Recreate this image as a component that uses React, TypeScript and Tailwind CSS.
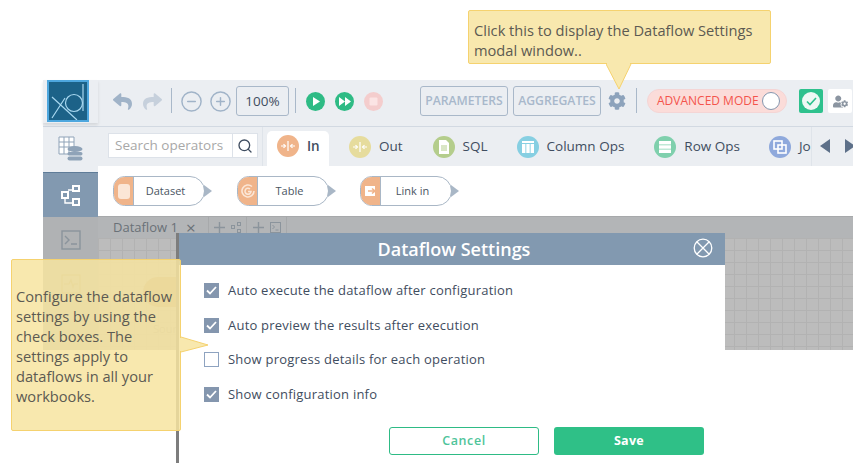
import { CircleMinus, CirclePlus, Search } from 'lucide-react'
import { FaCog, FaReply, FaShare, FaUserCog } from 'react-icons/fa'
import type { ReactNode } from 'react'

function InOutGlyph() {
  return (
    <svg width="16" height="12" viewBox="0 0 16 12" fill="none" stroke="#fff" strokeWidth="1.2">
      <path d="M8 1v10M1 6h4M15 6h-4" />
      <path d="M3.5 4.2 5.5 6l-2 1.8M12.5 4.2 10.5 6l2 1.8" />
    </svg>
  )
}

function TabCircle({ color, children }: { color: string; children: ReactNode }) {
  return <span className={`flex h-[22px] w-[22px] shrink-0 items-center justify-center rounded-full ${color}`}>{children}</span>
}

function PlusGlyph() {
  return (
    <svg width="11" height="11" viewBox="0 0 11 11" stroke="#8b949c" strokeWidth="1.4">
      <path d="M5.5 0v11M0 5.5h11" />
    </svg>
  )
}

const sqlGlyph = (
  <svg width="12" height="14" viewBox="0 0 12 14">
    <path d="M1 0h7l3 3v11H1z" fill="#fff" />
    <path d="M3 6h6M3 8h6M3 10h6" stroke="#b4cd8c" strokeWidth="1" />
  </svg>
)
const columnGlyph = (
  <svg width="14" height="14" viewBox="0 0 14 14" fill="#fff">
    <path d="M1 1h12v2H1zM1 4h3.4v9H1zM5.3 4h3.4v9H5.3zM9.6 4H13v9H9.6z" />
  </svg>
)
const rowGlyph = (
  <svg width="14" height="12" viewBox="0 0 14 12" fill="#fff">
    <path d="M1 0h12v3.4H1zM1 4.3h12v3.4H1zM1 8.6h12V12H1z" />
  </svg>
)
const joinGlyph = (
  <svg width="14" height="14" viewBox="0 0 14 14" fill="none" stroke="#fff" strokeWidth="1.6">
    <rect x="1" y="1" width="8" height="8" />
    <rect x="5" y="5" width="8" height="8" />
  </svg>
)

function OpTab({ label, color, glyph, className }: { label: string; color: string; glyph: ReactNode; className: string }) {
  return (
    <div className={`mt-[2px] flex h-[35px] shrink-0 items-center gap-[8px] text-[13.5px] text-[#3f4d60] ${className}`}>
      <TabCircle color={color}>{glyph}</TabCircle>
      <span>{label}</span>
    </div>
  )
}

function NodeGlyph({ kind }: { kind: string }) {
  if (kind === 'dataset') return <span className="h-[15px] w-[12px] rounded-[3px] bg-[#fbe6d6]" />
  if (kind === 'table')
    return (
      <svg width="14" height="14" viewBox="0 0 14 14" fill="none" stroke="#fbe6d6" strokeWidth="1.6">
        <path d="M11 2.5A6 6 0 1 0 13 7" />
        <path d="M9 5A3 3 0 1 0 10 7.5H7" />
      </svg>
    )
  return (
    <svg width="14" height="14" viewBox="0 0 14 14" fill="none">
      <path d="M1 2h10v10H1z" fill="#fff" />
      <path d="M4 7h6M8 4.5 11 7l-3 2.5" stroke="#f0b48a" strokeWidth="1.6" />
    </svg>
  )
}

function OperatorNode({ label, kind, className }: { label: string; kind: string; className: string }) {
  return (
    <div className={`flex items-center ${className}`}>
      <div className="flex h-[30px] w-[92px] overflow-hidden rounded-l-[14px] rounded-r-[18px] border border-[#a9b7c6] bg-white">
        <div className="flex w-[20px] shrink-0 items-center justify-center border-r border-[#a9b7c6] bg-[#f0b48a]">
          <NodeGlyph kind={kind} />
        </div>
        <div className="flex flex-1 items-center justify-center pr-[7px] text-[11px] text-[#4a5562]">{label}</div>
      </div>
      <svg width="8" height="12" viewBox="0 0 8 12" className="-ml-px">
        <path d="M0 0l8 6-8 6z" fill="#a9b7c6" />
      </svg>
    </div>
  )
}

function SettingRow({ label, checked, className }: { label: string; checked: boolean; className: string }) {
  return (
    <div className={`flex h-[20px] items-center gap-[9px] text-[13px] tracking-[0.22px] text-[#3f4d60] ${className}`}>
      {checked ? (
        <span className="flex h-[15px] w-[15px] items-center justify-center bg-[#8496ae]">
          <svg width="11" height="9" viewBox="0 0 11 9" fill="none" stroke="#fff" strokeWidth="1.8">
            <path d="M1 4.5 4 7.5 10 1" />
          </svg>
        </span>
      ) : (
        <span className="h-[15px] w-[15px] border border-[#8ea3c0] bg-white" />
      )}
      <span className="pt-[2px]">{label}</span>
    </div>
  )
}

function GridCanvas() {
  return (
    <div className="relative h-[112px] bg-[#bcbcbc] bg-[linear-gradient(#b2b2b2_1px,transparent_1px),linear-gradient(90deg,#b2b2b2_1px,transparent_1px)] bg-[size:12px_12px]">
      <div className="absolute top-[39px] left-[45px] h-[30px] w-[60px] rounded-l-[15px] bg-[#b09a80]" />
      <span className="absolute top-[83px] left-[55px] text-[11px] text-[#a0a0a0]">Source</span>
    </div>
  )
}

export default function App() {
  return (
    <div className="relative h-[475px] w-[868px] overflow-hidden bg-white font-['Open_Sans',sans-serif]">
      <div className="ml-[43px] w-[810px] pt-[80px]">
        {/* top toolbar */}
        <div className="flex h-[47px] items-start border-b border-[#d2d9e2] bg-[#ebeef2] pt-[6px]">
          <div className="-mt-[6px] h-[43px] w-[55px] shrink-0 pl-[4px] shadow-[0_2px_3px_rgba(0,0,0,0.1)]">
            <div className="flex h-[42px] w-[42px] items-center justify-center border-2 border-[#4ea7de] bg-[#1c6288]">
              <svg width="38" height="38" viewBox="0 0 38 38" fill="none" stroke="#a8d8f0" strokeWidth="1.2">
                <path d="M3 15 28 38M3 36l13-20" />
                <circle cx="25" cy="21" r="8.5" />
                <path d="M34 2v27" />
              </svg>
            </div>
          </div>
          <FaReply className="mt-[6px] ml-[15px] text-[19px] text-[#a0b3c8]" />
          <FaShare className="mt-[6px] ml-[11px] text-[19px] text-[#c6d0dc]" />
          <div className="mt-[2px] ml-[9px] h-[25px] w-px bg-[#a9b8c9]" />
          <CircleMinus size={23} strokeWidth={1.5} className="mt-[4px] ml-[8px] text-[#a0b3c8]" />
          <CirclePlus size={23} strokeWidth={1.5} className="mt-[4px] ml-[6px] text-[#a0b3c8]" />
          <div className="ml-[4px] flex h-[30px] w-[53px] items-center justify-center rounded-[3px] border border-[#a9b8c9] text-[13.5px] text-[#3f4d60]">100%</div>
          <div className="mt-[2px] ml-[6px] h-[25px] w-px bg-[#a9b8c9]" />
          <svg width="19" height="19" viewBox="0 0 19 19" className="mt-[6px] ml-[10px]">
            <circle cx="9.5" cy="9.5" r="9.5" fill="#2ebb85" />
            <path d="M7 5l7 4.5L7 14z" fill="#fff" />
          </svg>
          <svg width="19" height="19" viewBox="0 0 19 19" className="mt-[6px] ml-[10px]">
            <circle cx="9.5" cy="9.5" r="9.5" fill="#2ebb85" />
            <path d="M4 5l6 4.5L4 14zM10 5l6 4.5-6 4.500z" fill="#fff" />
          </svg>
          <svg width="19" height="19" viewBox="0 0 19 19" className="mt-[6px] ml-[10px]">
            <circle cx="9.5" cy="9.5" r="9.5" fill="#f4cdcd" />
            <rect x="5.5" y="5.5" width="8" height="8" rx="1" fill="#fbe4e4" />
          </svg>
          <div className="ml-[37px] flex h-[30px] w-[88px] items-center justify-center rounded-[3px] border border-[#a9b8c9] text-[12.2px] font-semibold text-[#a8b8cb]">PARAMETERS</div>
          <div className="ml-[5px] flex h-[30px] w-[88px] items-center justify-center rounded-[3px] border border-[#a9b8c9] text-[12.2px] font-semibold text-[#a8b8cb]">AGGREGATES</div>
          <FaCog className="mt-[6px] ml-[7px] text-[18px] text-[#8da3bc]" />
          <div className="mt-[2px] ml-[10px] h-[25px] w-px bg-[#a9b8c9]" />
          <div className="mt-[3px] ml-[10px] flex h-[24px] w-[140px] items-center rounded-full border border-[#f4d5d5] bg-[#fbdcd9] pl-[9px] text-[12px] text-[#f4544c]">
            <span>ADVANCED MODE</span>
            <span className="ml-[3px] h-[18px] w-[18px] shrink-0 rounded-full border border-[#8496ae] bg-white" />
          </div>
          <div className="mt-[3px] ml-[12px] flex h-[24px] w-[24px] items-center justify-center rounded-[2px] bg-[#2ec18d]">
            <span className="flex h-[18px] w-[18px] items-center justify-center rounded-full bg-[#eef8f4]">
              <svg width="11" height="9" viewBox="0 0 11 9" fill="none" stroke="#2ec18d" strokeWidth="1.6">
                <path d="M1 4.5 4 7.5 10 1" />
              </svg>
            </span>
          </div>
          <div className="mt-[3px] ml-[5px] flex h-[24px] w-[24px] items-center justify-center rounded-[2px] bg-white">
            <FaUserCog className="text-[15px] text-[#8b95a1]" />
          </div>
        </div>

        {/* operators row */}
        <div className="flex h-[39px] bg-[#ebeef2]">
          <div className="flex w-[55px] shrink-0 items-center justify-center pt-[5px]">
            <svg width="25" height="26" viewBox="0 0 25 26" fill="none">
              <path d="M1 1h15v17H1z" fill="#fff" stroke="#8fa3b8" />
              <path d="M1 6h15M1 11h15M6 1v17M11 1v17" stroke="#8fa3b8" />
              <ellipse cx="17" cy="13" rx="7.5" ry="3" fill="#8fa3b8" />
              <rect x="9.5" y="16" width="15" height="3.5" rx="1.7" fill="#8fa3b8" />
              <rect x="9.5" y="20.5" width="15" height="4" rx="2" fill="#8fa3b8" />
            </svg>
          </div>
          <div className="mt-[6px] ml-[10px] flex h-[25px] w-[150px] shrink-0 border border-[#dde2e9] bg-white text-[13.5px] text-[#a8a8a8]">
            <span className="flex-1 truncate pl-[6px] leading-[23px]">Search operators</span>
            <span className="flex w-[25px] items-center justify-center border-l border-[#dde2e9] text-[#3f4d60]">
              <Search size={16} strokeWidth={2} />
            </span>
          </div>
          <div className="ml-[4px] h-[39px] w-px shrink-0 bg-[#dfe4ea]" />
          <div className="flex min-w-0 flex-1 overflow-hidden pl-[4px]">
            <div className="mt-[4px] flex h-[35px] w-[62px] shrink-0 items-center gap-[8px] rounded-t-[5px] bg-white pb-[5px] pl-[10px] text-[13.5px] font-semibold text-[#3f4d60]">
              <TabCircle color="bg-[#f0b48a]"><InOutGlyph /></TabCircle>
              <span>In</span>
            </div>
            <OpTab label="Out" color="bg-[#e6dc9d]" glyph={<InOutGlyph />} className="ml-[20px]" />
            <OpTab label="SQL" color="bg-[#b4cd8c]" glyph={sqlGlyph} className="ml-[30px]" />
            <OpTab label="Column Ops" color="bg-[#86cfe2]" glyph={columnGlyph} className="ml-[29px]" />
            <OpTab label="Row Ops" color="bg-[#7fd0ad]" glyph={rowGlyph} className="ml-[30px]" />
            <OpTab label="Jo" color="bg-[#8fa9dc]" glyph={joinGlyph} className="ml-[29px]" />
          </div>
          <div className="flex h-[39px] w-[42px] shrink-0 items-center gap-[15px] overflow-hidden border-l border-[#dfe4ea] pb-[2px] pl-[8px]">
            <svg width="10" height="14" viewBox="0 0 10 14" className="shrink-0"><path d="M10 0v14L0 7z" fill="#5d7089" /></svg>
            <svg width="10" height="14" viewBox="0 0 10 14" className="shrink-0"><path d="M0 0v14l10-7z" fill="#5d7089" /></svg>
          </div>
        </div>

        {/* sidebar + canvas */}
        <div className="flex">
          <div className="flex w-[55px] shrink-0 flex-col">
            <div className="h-[6px] bg-[#ebeef2]" />
            <div className="flex h-[45px] items-center justify-center border-t border-[#5f7c98] bg-[#8299b0]">
              <svg width="20" height="21" viewBox="0 0 20 21" fill="none" stroke="#fff" strokeWidth="2">
                <rect x="1" y="7" width="6" height="6" />
                <rect x="12" y="1" width="6" height="5" />
                <rect x="12" y="14" width="6" height="6" />
                <path d="M7 5h5M4 13v5h8" strokeWidth="1.4" />
              </svg>
            </div>
            <div className="flex flex-1 flex-col items-center bg-[#b0b2b4] pt-[13px]">
              <svg width="20" height="20" viewBox="0 0 20 20" fill="none" stroke="#8b949c" strokeWidth="1.4">
                <rect x="1" y="1" width="18" height="18" />
                <path d="M4 6l4 4-4 4M10 14h6" />
              </svg>
              <svg width="20" height="20" viewBox="0 0 20 20" fill="none" stroke="#a39f80" strokeWidth="1.2" className="mt-[24px]">
                <rect x="1" y="1" width="18" height="18" />
                <path d="M3 10h5l2-4 2 7 1-3h4" />
              </svg>
            </div>
          </div>
          <div className="flex-1">
            <div className="h-[50px] bg-white">
              <div className="flex pt-[10px] pl-[15px]">
                <OperatorNode label="Dataset" kind="dataset" className="" />
                <OperatorNode label="Table" kind="table" className="ml-[25px]" />
                <OperatorNode label="Link in" kind="link" className="ml-[24px]" />
              </div>
            </div>
            <div className="flex h-[22px] items-center border-t border-[#a7a9ab] bg-[#b3b5b7] text-[#6a7178]">
              <span className="w-[73px] pl-[15px] text-[13px] whitespace-nowrap">Dataflow 1</span>
              <span className="ml-[15px] w-[22px] text-[17px] leading-none">×</span>
              <div className="flex h-full w-[39px] items-center gap-[6px] border-x border-[#a7a9ab] pl-[5px]">
                <PlusGlyph />
                <svg width="11" height="11" viewBox="0 0 11 11" fill="none" stroke="#8b949c"><rect x=".5" y="3.5" width="3" height="3" /><rect x="6.5" y=".5" width="3" height="3" /><rect x="6.5" y="7.5" width="3" height="3" /></svg>
              </div>
              <div className="flex h-full w-[40px] items-center gap-[6px] border-r border-[#a7a9ab] pl-[6px]">
                <PlusGlyph />
                <svg width="11" height="11" viewBox="0 0 11 11" fill="none" stroke="#8b949c"><rect x=".5" y=".5" width="10" height="10" /><path d="M2.5 3l2 2-2 2M5.5 8h3" /></svg>
              </div>
            </div>
            <GridCanvas />
          </div>
        </div>
      </div>

      {/* settings modal */}
      <div className="absolute top-[233px] left-[176px] h-[230px] w-[549px] border-l-[3px] border-[#7d7d7d] bg-white">
        <div className="relative flex h-[32px] items-center justify-center bg-[#8299b0] pl-[4px] text-[18px] font-semibold text-white">
          Dataflow Settings
          <svg width="20" height="20" viewBox="0 0 20 20" fill="none" stroke="#fff" strokeWidth="1.3" className="absolute top-[5px] right-[12px]">
            <circle cx="10" cy="10" r="8.8" />
            <path d="M3.8 3.8l12.4 12.4M16.2 3.8 3.8 16.2" />
          </svg>
        </div>
        <div className="pt-[15px] pl-[25px]">
          <SettingRow label="Auto execute the dataflow after configuration" checked className="" />
          <SettingRow label="Auto preview the results after execution" checked className="mt-[15px]" />
          <SettingRow label="Show progress details for each operation" checked={false} className="mt-[14px]" />
          <SettingRow label="Show configuration info" checked className="mt-[15px]" />
        </div>
        <div className="mt-[23px] flex gap-[15px] pl-[210px]">
          <button className="h-[28px] w-[150px] rounded-[3px] border border-[#2ebb85] bg-white text-[12.5px] font-semibold tracking-[0.6px] text-[#4fc49a]">Cancel</button>
          <button className="h-[28px] w-[150px] rounded-[3px] bg-[#2fc087] text-[12.5px] font-bold tracking-[0.3px] text-white">Save</button>
        </div>
      </div>

      {/* top callout */}
      <div className="absolute top-[10px] left-[468px] h-[54px] w-[303px] rounded-[2px] border border-[#f5d26f] bg-[#f8e8ae] pt-[9px] pl-[5px] text-[14.65px] leading-[20px] text-[#5c5a52]">
        <div>Click this to display the Dataflow Settings</div>
        <div>modal window..</div>
      </div>
      <svg width="26" height="28" viewBox="0 0 26 28" className="absolute top-[63px] left-[606px]">
        <path d="M0 1 13 26 25 1" fill="#f8e8ae" stroke="#f5d26f" />
        <path d="M1 0h23v2H1z" fill="#f8e8ae" />
      </svg>

      {/* left callout */}
      <div className="absolute top-[259px] left-[11px] h-[172px] w-[170px] rounded-[2px] border border-[#f5d26f] bg-[#f7e4a0]/85 pt-[26px] pl-[4px] text-[14.65px] leading-[20px] text-[#5c5a52]">
        <div>Configure the dataflow</div>
        <div>settings by using the</div>
        <div>check boxes. The</div>
        <div>settings apply to</div>
        <div>dataflows in all your</div>
        <div>workbooks.</div>
      </div>
      <svg width="29" height="17" viewBox="0 0 29 17" className="absolute top-[336px] left-[180px]">
        <path d="M1 1 28 9 1 16" fill="#f8e8ae" stroke="#f5d26f" />
        <path d="M0 2h2v13H0z" fill="#f8e8ae" />
      </svg>
    </div>
  )
}
